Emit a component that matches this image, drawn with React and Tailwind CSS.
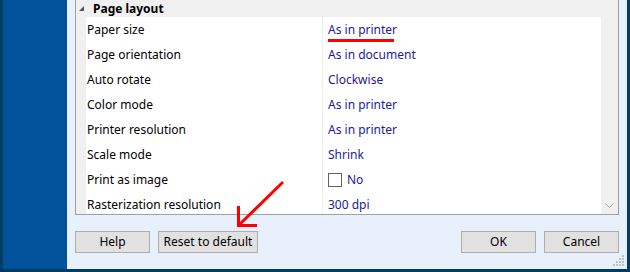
import React from "react";

const rows = [
  ["Paper size", "As in printer"],
  ["Page orientation", "As in document"],
  ["Auto rotate", "Clockwise"],
  ["Color mode", "As in printer"],
  ["Printer resolution", "As in printer"],
  ["Scale mode", "Shrink"],
  ["Print as image", "__check"],
  ["Rasterization resolution", "300 dpi"],
];

function Btn({ w, children }) {
  return (
    <div
      className={`${w} h-[22px] bg-[#e1e1e1] border border-[#adadad] flex items-center justify-center text-[12px] text-black`}
    >
      {children}
    </div>
  );
}

export default function App() {
  return (
    <div
      className="relative w-[630px] h-[272px] flex flex-col bg-[#003c64] overflow-hidden"
      style={{ fontFamily: '"Noto Sans", "Open Sans", sans-serif' }}
    >
      <div className="flex flex-row h-[269px]">
        <div className="w-[3px] bg-[#003c64]" />
        <div className="w-[64px] bg-[#00539b]" />
        <div className="flex-1 bg-[#e8f1fb] flex flex-col pl-[8px] pr-[8px]">
          <div className="h-[215px] shrink-0 flex flex-row border-l border-b border-r border-[#a0a0a0] bg-white overflow-hidden">
            <div className="w-[10px] bg-[#f0f0f0]" />
            <div className="flex-1 flex flex-col">
              <div className="h-[17px] shrink-0 bg-[#f0f0f0] flex items-center relative">
                <svg className="absolute left-[-7px] top-[6px]" width="6" height="6" viewBox="0 0 6 6">
                  <polygon points="5,0 5,5 0,5" fill="#555" />
                </svg>
                <span className="pl-[7px] text-[12px] font-bold text-black leading-none">Page layout</span>
              </div>
              {rows.map(([k, v]) => (
                <div key={k} className="h-[25px] shrink-0 flex flex-row">
                  <div className="w-[237px] pl-[1px] flex items-center text-[12px] text-black border-r border-[#f0f0f0]">
                    {k}
                  </div>
                  <div className="flex-1 pl-[5px] flex items-center text-[12px] text-[#1a1aa0]">
                    {v === "__check" ? (
                      <span className="flex items-center gap-[5px]">
                        <span className="w-[14px] h-[14px] border border-[#606060] bg-white" />
                        <span>No</span>
                      </span>
                    ) : (
                      v
                    )}
                  </div>
                </div>
              ))}
            </div>
            <div className="w-[17px] bg-[#f0f0f0] flex flex-col justify-end items-center pb-[5px]">
              <svg width="9" height="6" viewBox="0 0 9 6">
                <polyline points="0.5,0.5 4.5,4.5 8.5,0.5" fill="none" stroke="#a6a6a6" strokeWidth="1" />
              </svg>
            </div>
          </div>
          <div className="mt-[16px] flex flex-row">
            <Btn w="w-[75px]">Help</Btn>
            <div className="w-[8px]" />
            <Btn w="w-[100px]">Reset to default</Btn>
            <div className="flex-1" />
            <Btn w="w-[75px]">OK</Btn>
            <div className="w-[8px]" />
            <Btn w="w-[75px]">Cancel</Btn>
          </div>
          <div className="flex-1 relative">
            <svg className="absolute right-[-5px] bottom-[3px]" width="12" height="12" viewBox="0 0 12 12">
              {[[10, 1], [10, 4], [7, 4], [10, 7], [7, 7], [4, 7], [10, 10], [7, 10], [4, 10], [1, 10]].map(([x, y], i) => (
                <rect key={i} x={x} y={y} width="2" height="2" fill="#b8c4d0" />
              ))}
            </svg>
          </div>
        </div>
        <div className="w-[3px] bg-[#003c64]" />
      </div>
      <div className="h-[3px] bg-[#003c64]" />

      <div className="absolute left-[328px] top-[39px] w-[66px] h-[3px] bg-[#ff0000]" />
      <svg className="absolute left-0 top-0 pointer-events-none" width="630" height="272" viewBox="0 0 630 272">
        <line x1="283" y1="182" x2="239" y2="225" stroke="#ff0000" strokeWidth="3" />
        <polyline points="238.5,206 238.5,225.5 257,225.5" fill="none" stroke="#ff0000" strokeWidth="3" />
      </svg>
    </div>
  );
}
